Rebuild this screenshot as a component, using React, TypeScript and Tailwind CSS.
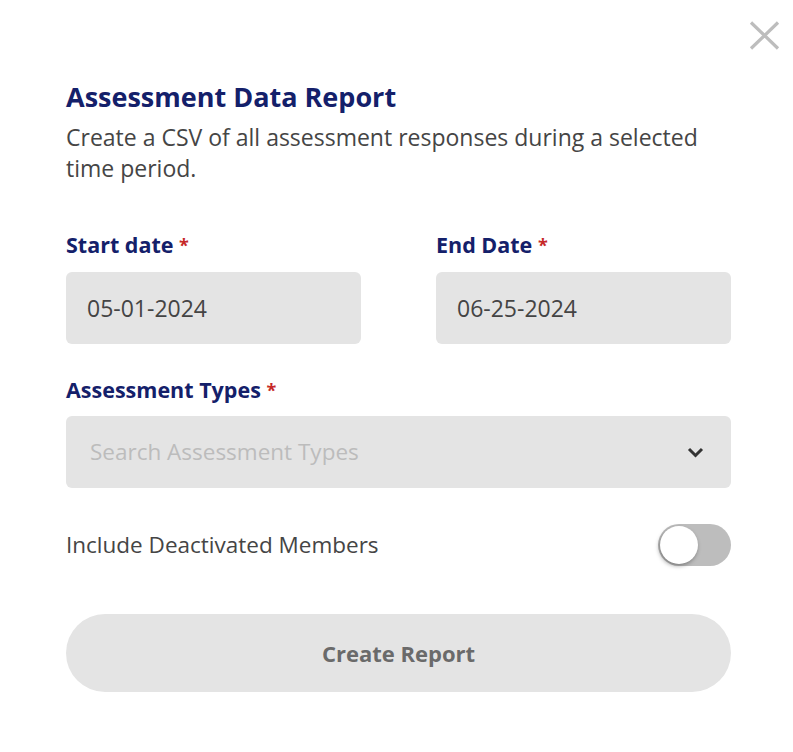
import React from "react";

function Label({ children }: { children: React.ReactNode }) {
  return (
    <div className="text-[21.5px] font-bold leading-[24px] text-[#14206a]">
      {children} <span className="text-[#c62828] text-[18px] align-top">*</span>
    </div>
  );
}

export default function App() {
  return (
    <div className="w-[793px] h-[752px] bg-white relative font-['Open_Sans',sans-serif]">
      <button className="absolute left-[749px] top-[21px] w-[31px] h-[29px]" aria-label="Close">
        <svg width="31" height="29" viewBox="0 0 31 29">
          <path d="M2 1.5 L29 27.5 M29 1.5 L2 27.5" stroke="#bdbdbd" strokeWidth="3.2" />
        </svg>
      </button>
      <div className="pt-[82px] pl-[66px] w-[731px] flex flex-col">
        <h1 className="text-[27px] font-bold leading-[30px] text-[#14206a]">Assessment Data Report</h1>
        <p className="mt-[10px] text-[23px] leading-[31px] text-[#454545] whitespace-nowrap">
          Create a CSV of all assessment responses during a selected
          <br />
          time period.
        </p>
        <div className="mt-[49px] grid grid-cols-2 gap-x-[75px]">
          <div className="flex flex-col">
            <Label>Start date</Label>
            <div className="mt-[15px] h-[72px] rounded-[6px] bg-[#e4e4e4] flex items-center px-[21px] text-[23px] text-[#444]">
              05-01-2024
            </div>
          </div>
          <div className="flex flex-col">
            <Label>End Date</Label>
            <div className="mt-[15px] h-[72px] rounded-[6px] bg-[#e4e4e4] flex items-center px-[21px] text-[23px] text-[#444]">
              06-25-2024
            </div>
          </div>
        </div>
        <div className="mt-[34px]">
          <Label>Assessment Types</Label>
        </div>
        <div className="mt-[14px] h-[72px] rounded-[6px] bg-[#e4e4e4] flex items-center justify-between pl-[24px] pr-[27px]">
          <span className="text-[22.5px] text-[#bcbcbc]">Search Assessment Types</span>
          <svg width="17" height="11" viewBox="0 0 17 11">
            <path d="M2 2 L8.5 8.5 L15 2" stroke="#333" strokeWidth="3" fill="none" />
          </svg>
        </div>
        <div className="mt-[36px] flex items-center justify-between">
          <span className="text-[22.5px] text-[#454545]">Include Deactivated Members</span>
          <div className="w-[73px] h-[42px] rounded-full bg-[#bdbdbd] relative">
            <div className="absolute left-[2px] top-[2px] w-[38px] h-[38px] rounded-full bg-white shadow-[-1px_2px_4px_rgba(0,0,0,0.35)]" />
          </div>
        </div>
        <button className="mt-[48px] h-[78px] rounded-full bg-[#e4e4e4] text-[22px] font-bold text-[#6a6a6a]">
          Create Report
        </button>
      </div>
    </div>
  );
}
